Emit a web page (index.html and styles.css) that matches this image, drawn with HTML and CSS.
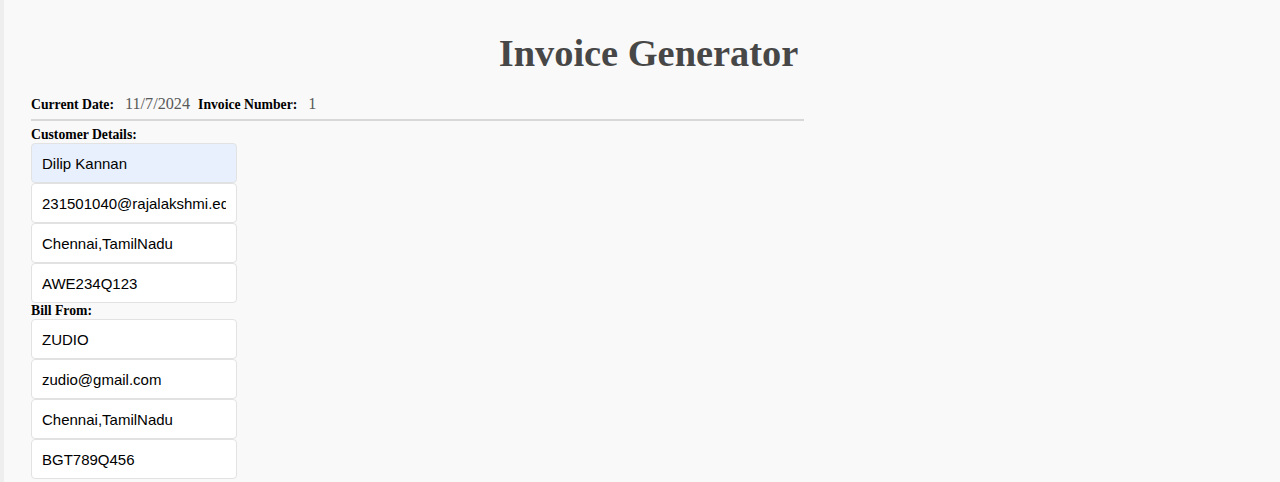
FILE: index.html
```html
<!DOCTYPE html>
<html lang="en">
<head>
<meta charset="utf-8">
<title>Invoice Generator</title>
<link rel="stylesheet" href="styles.css">
</head>
<body>
<div class="page">
  <h1 class="title">Invoice Generator</h1>
  <div class="content">
    <div class="meta">
      <span class="meta-label">Current Date:</span>
      <span class="meta-value">11/7/2024</span>
      <span class="meta-label">Invoice Number:</span>
      <span class="meta-value">1</span>
    </div>
    <div class="section section-first">
      <div class="section-label">Customer Details:</div>
      <input class="field field-filled" type="text" value="Dilip Kannan">
      <input class="field" type="text" value="231501040@rajalakshmi.edu.in">
      <input class="field" type="text" value="Chennai,TamilNadu">
      <input class="field" type="text" value="AWE234Q123">
    </div>
    <div class="section">
      <div class="section-label">Bill From:</div>
      <input class="field" type="text" value="ZUDIO">
      <input class="field" type="text" value="zudio@gmail.com">
      <input class="field" type="text" value="Chennai,TamilNadu">
      <input class="field" type="text" value="BGT789Q456">
    </div>
  </div>
</div>
</body>
</html>
```

FILE: styles.css
```css
html, body {
  margin: 0;
  padding: 0;
  background: #f9f9f9;
}

body {
  border-left: 4px solid #eeeeee;
  min-height: 482px;
  box-sizing: border-box;
  font-family: "Liberation Serif", "Times New Roman", serif;
}

.page {
  padding: 0 27px;
}

.title {
  margin: 31px 0 20px 0;
  padding-left: 13px;
  text-align: center;
  font-family: "Liberation Serif", "Times New Roman", serif;
  font-weight: bold;
  font-size: 38.4px;
  line-height: 44px;
  color: #474747;
}

.content {
  width: 773px;
}

.meta {
  display: flex;
  align-items: baseline;
  padding-bottom: 5px;
  border-bottom: 2px solid #d8d8d8;
}

.meta-label {
  font-weight: bold;
  font-size: 13.7px;
  color: #000;
}

.meta-value {
  font-size: 16.2px;
  color: #5a5a5a;
  margin-left: 11px;
  margin-right: 8px;
}

.section-label {
  font-weight: bold;
  font-size: 13.7px;
  line-height: 16px;
  color: #000;
}

.section-first .section-label {
  margin-top: 6px;
}

.field {
  display: block;
  box-sizing: border-box;
  width: 206px;
  height: 40px;
  margin: 0;
  padding: 0 10px;
  border: 1px solid #e2e2e2;
  border-radius: 4px;
  background: #ffffff;
  font-family: "Liberation Sans", Arial, sans-serif;
  font-size: 15px;
  color: #000;
  outline: none;
}

.field-filled {
  background: #e8f0fe;
}
```
